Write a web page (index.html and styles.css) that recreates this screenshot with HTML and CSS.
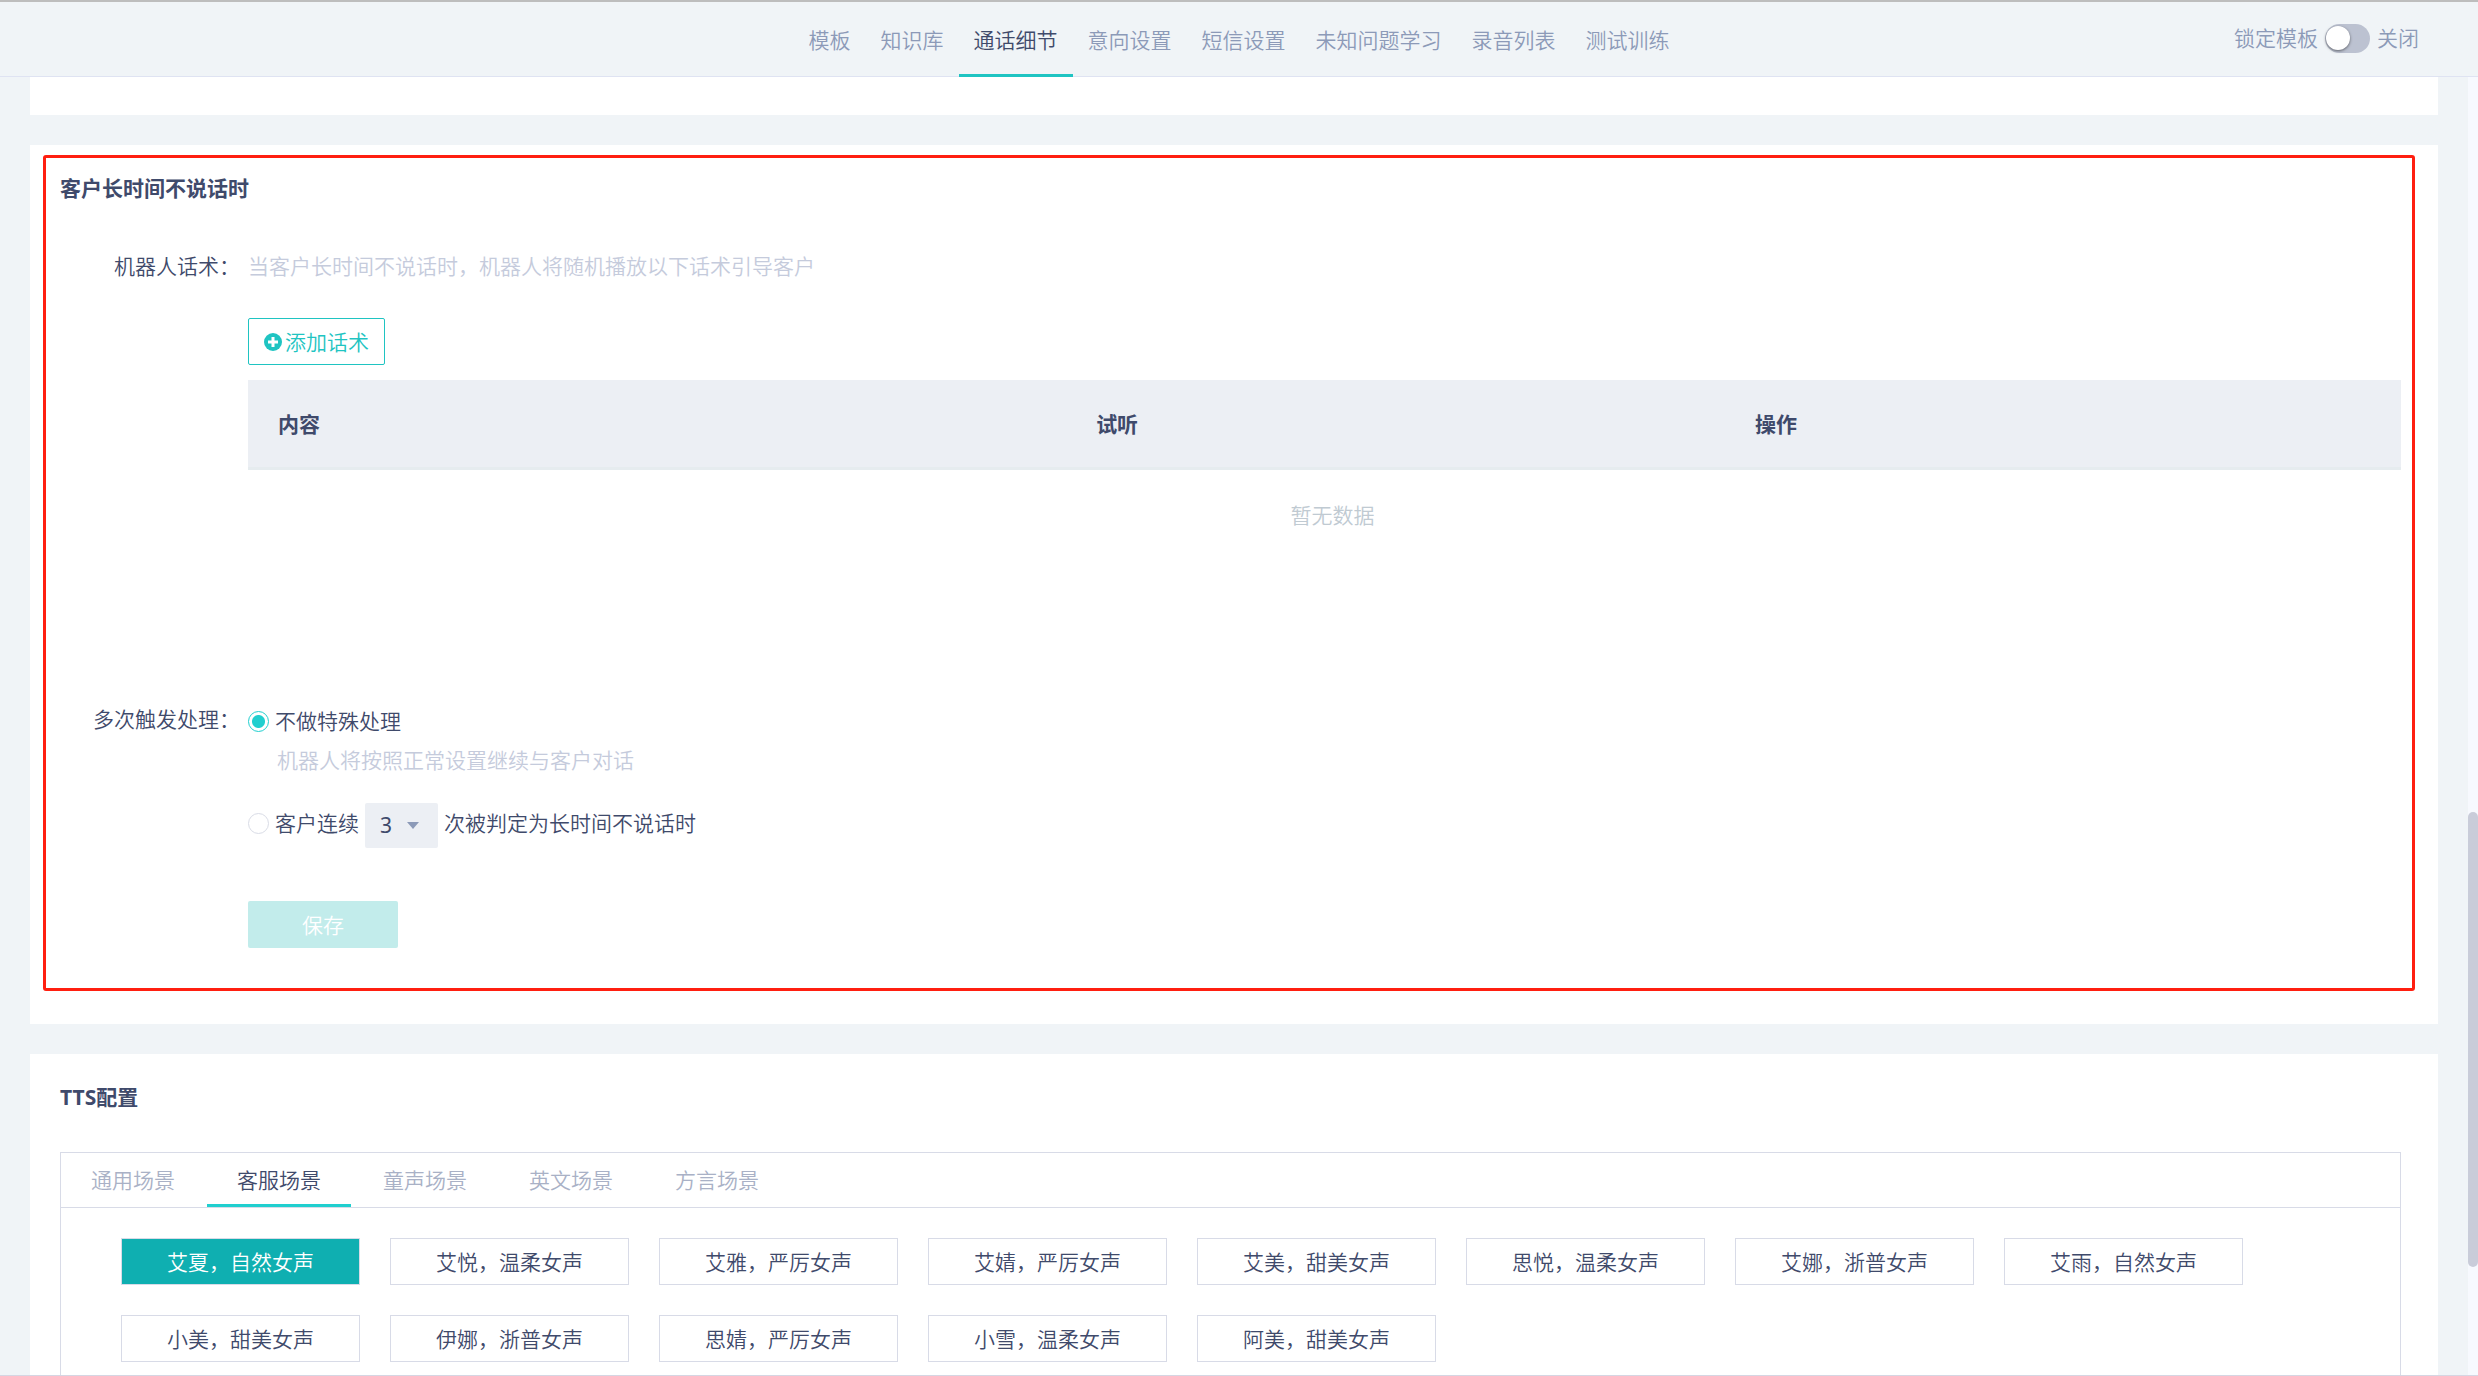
FILE: index.html
```html
<!DOCTYPE html>
<html lang="zh-CN">
<head>
<meta charset="utf-8">
<title>通话细节</title>
<link rel="stylesheet" href="styles.css">
</head>
<body>
<header class="topbar">
  <nav class="nav">
    <a class="nav-link" href="#">模板</a>
    <a class="nav-link" href="#">知识库</a>
    <a class="nav-link active" href="#">通话细节</a>
    <a class="nav-link" href="#">意向设置</a>
    <a class="nav-link" href="#">短信设置</a>
    <a class="nav-link" href="#">未知问题学习</a>
    <a class="nav-link" href="#">录音列表</a>
    <a class="nav-link" href="#">测试训练</a>
  </nav>
  <div class="lock">
    <label for="lock">锁定模板</label>
    <input class="switch" type="checkbox" id="lock" role="switch">
    <span>关闭</span>
  </div>
</header>
<div class="shell">
  <main class="content">
    <section class="card card-tail"></section>

    <section class="card silence">
      <h2 class="card-title">客户长时间不说话时</h2>
      <div class="form-row">
        <span class="form-label">机器人话术：</span>
        <div class="form-body">
          <p class="hint">当客户长时间不说话时，机器人将随机播放以下话术引导客户</p>
          <button class="add-btn" type="button">
            <svg class="add-icon" viewBox="0 0 18 18" aria-hidden="true"><circle cx="9" cy="9" r="9"/><path d="M9 4v10M4 9h10"/></svg>添加话术
          </button>
          <table class="speech-table">
            <thead>
              <tr><th class="col-content">内容</th><th class="col-listen">试听</th><th>操作</th></tr>
            </thead>
            <tbody>
              <tr><td class="empty" colspan="3">暂无数据</td></tr>
            </tbody>
          </table>
        </div>
      </div>
      <div class="form-row">
        <span class="form-label">多次触发处理：</span>
        <div class="form-body">
          <div class="option option-first">
            <input class="radio" type="radio" name="repeat" id="repeat-none" checked>
            <label for="repeat-none">不做特殊处理</label>
          </div>
          <p class="hint option-hint">机器人将按照正常设置继续与客户对话</p>
          <div class="option option-times">
            <input class="radio" type="radio" name="repeat" id="repeat-times">
            <label for="repeat-times">客户连续</label>
            <span class="select-wrap">
              <select class="select" aria-label="次数"><option>3</option></select>
              <svg class="caret" viewBox="0 0 12 7" aria-hidden="true"><path d="M0 0h12L6 7z"/></svg>
            </span>
            <span>次被判定为长时间不说话时</span>
          </div>
          <button class="save-btn" type="button" disabled>保存</button>
        </div>
      </div>
      <div class="highlight"></div>
    </section>

    <section class="card tts">
      <h2 class="card-title">TTS配置</h2>
      <div class="tts-panel">
        <div class="tabs" role="tablist">
          <button class="tab" type="button" role="tab">通用场景</button>
          <button class="tab active" type="button" role="tab">客服场景</button>
          <button class="tab" type="button" role="tab">童声场景</button>
          <button class="tab" type="button" role="tab">英文场景</button>
          <button class="tab" type="button" role="tab">方言场景</button>
        </div>
        <div class="voices">
          <button class="voice active" type="button">艾夏，自然女声</button>
          <button class="voice" type="button">艾悦，温柔女声</button>
          <button class="voice" type="button">艾雅，严厉女声</button>
          <button class="voice" type="button">艾婧，严厉女声</button>
          <button class="voice" type="button">艾美，甜美女声</button>
          <button class="voice" type="button">思悦，温柔女声</button>
          <button class="voice" type="button">艾娜，浙普女声</button>
          <button class="voice" type="button">艾雨，自然女声</button>
          <button class="voice" type="button">小美，甜美女声</button>
          <button class="voice" type="button">伊娜，浙普女声</button>
          <button class="voice" type="button">思婧，严厉女声</button>
          <button class="voice" type="button">小雪，温柔女声</button>
          <button class="voice" type="button">阿美，甜美女声</button>
        </div>
      </div>
    </section>
  </main>
  <div class="rail"><div class="thumb"></div></div>
</div>
</body>
</html>
```
FILE: styles.css
```css
* { box-sizing: border-box; }

body {
  margin: 0;
  height: 100vh;
  display: flex;
  flex-direction: column;
  overflow: hidden;
  background: #f0f4f7;
  border-top: 2px solid #bdbdbd;
  border-bottom: 1px solid #d5d6e3;
  color: #3f4a6b;
  font: 350 21px/30px "Noto Sans", "Noto Sans CJK SC", sans-serif;
}

button, select { font: inherit; color: inherit; margin: 0; }
p, h2 { margin: 0; }

/* top bar */
.topbar {
  flex: none;
  display: grid;
  grid-template-columns: 1fr auto 1fr;
  height: 75px;
  border-bottom: 1px solid #dfe3f2;
  color: #8c9ab8;
}
.nav { grid-column: 2; display: flex; }
.nav-link {
  height: 75px;
  padding: 23px 15px 0;
  color: inherit;
  text-decoration: none;
}
.nav-link.active {
  color: #3f4a6b;
  border-bottom: 3px solid #1fc4c2;
}
.lock {
  display: flex;
  align-items: center;
  justify-content: flex-end;
  gap: 7px;
  height: 72px;
  padding-right: 59px;
}
.switch {
  appearance: none;
  width: 45px;
  height: 29px;
  margin: 0;
  padding: 2px 1px;
  border-radius: 15px;
  background: #bcc2d1;
}
.switch::before {
  content: "";
  display: block;
  width: 24px;
  height: 24px;
  border-radius: 50%;
  background: #fff;
  box-shadow: 0 1px 3px rgba(0, 0, 0, .5);
}

/* scrolling area */
.shell { flex: 1; min-height: 0; display: flex; }
.content {
  flex: 1;
  display: flex;
  flex-direction: column;
  gap: 30px;
  overflow: hidden;
  padding: 0 30px;
}
.rail { position: relative; width: 10px; background: #f7f9fe; }
.thumb {
  position: absolute;
  top: 56.6%;
  width: 10px;
  height: 35.1%;
  border-radius: 5px;
  background: #c9ccd9;
}

.card { flex: none; padding: 28px 37px 0 30px; background: #fff; }
.card-tail { padding-top: 38px; }
.card-title { font-size: 21px; line-height: 30px; font-weight: 700; }

/* silence settings */
.silence { position: relative; padding-bottom: 76px; }
.silence .card-title { margin-bottom: 48px; }
.highlight {
  position: absolute;
  inset: 10px 23px 33px 13px;
  border: 3px solid #ff1f10;
  border-radius: 3px;
  pointer-events: none;
}
.form-row {
  display: grid;
  grid-template-columns: 180px 1fr;
  gap: 8px;
}
.form-label { text-align: right; }
.hint { color: #c5cbdc; }
.add-btn {
  display: flex;
  align-items: center;
  gap: 3px;
  height: 47px;
  margin: 37px 0 15px;
  padding: 0 15px;
  border: 1px solid #1fc4c2;
  border-radius: 2px;
  background: #fff;
  color: #1fc4c2;
}
.add-icon { width: 18px; height: 18px; fill: #1fc4c2; stroke: #fff; stroke-width: 3; }
.add-icon circle { stroke: none; }

.speech-table { width: 100%; border-spacing: 0; table-layout: fixed; }
.speech-table th {
  height: 90px;
  padding: 0 30px;
  border-bottom: 3px solid #e6ecef;
  background: #eceff4;
  text-align: left;
  font-weight: 700;
}
.speech-table .col-content { width: 38%; }
.speech-table .col-listen { width: 30.6%; }
.speech-table .empty {
  height: 234px;
  padding: 30px 0 0 16px;
  color: #c0cad2;
  text-align: center;
  vertical-align: top;
}

.option { display: flex; align-items: center; gap: 6px; }
.option-first { padding-top: 2px; }
.option-hint { margin: 9px 0 28px 29px; }
.option-times {
  align-items: flex-start;
  height: 45px;
  margin-bottom: 53px;
  line-height: 41px;
}
.radio {
  appearance: none;
  width: 21px;
  height: 21px;
  margin: 0;
  border: 1px solid #d9dce6;
  border-radius: 50%;
  background: #fff;
}
.option-times .radio { margin-top: 10px; }
.radio:checked {
  border-color: #20cfcf;
  background: radial-gradient(circle, #20cfcf 6px, #fff 7px);
}
.select-wrap { position: relative; display: flex; }
.select {
  appearance: none;
  width: 73px;
  height: 45px;
  padding: 0 15px;
  border: 0;
  border-radius: 2px;
  background: #eceff4;
  font-weight: 400;
}
.caret {
  position: absolute;
  right: 19px;
  top: 19px;
  width: 12px;
  height: 7px;
  fill: #8c9ab8;
  pointer-events: none;
}
.save-btn {
  display: block;
  width: 150px;
  height: 47px;
  padding: 0;
  border: 0;
  border-radius: 2px;
  background: #c2eceb;
  color: #fff;
}

/* TTS settings */
.tts-panel {
  min-height: 400px;
  margin-top: 40px;
  border: 1px solid #d8dbe7;
}
.tabs {
  display: flex;
  gap: 2px;
  border-bottom: 1px solid #d8dbe7;
}
.tab {
  height: 54px;
  padding: 3px 30px 0;
  border: 0;
  border-bottom: 3px solid transparent;
  background: none;
  color: #a9b1c6;
}
.tab.active { border-bottom-color: #20cfcf; color: #3f4a6b; }
.voices {
  display: flex;
  flex-wrap: wrap;
  gap: 30px;
  padding: 30px 60px;
}
.voice {
  width: 239px;
  height: 47px;
  padding: 0;
  border: 1px solid #d8dbe7;
  background: #fff;
}
.voice.active { background: #0fafb1; color: #fff; }
```
